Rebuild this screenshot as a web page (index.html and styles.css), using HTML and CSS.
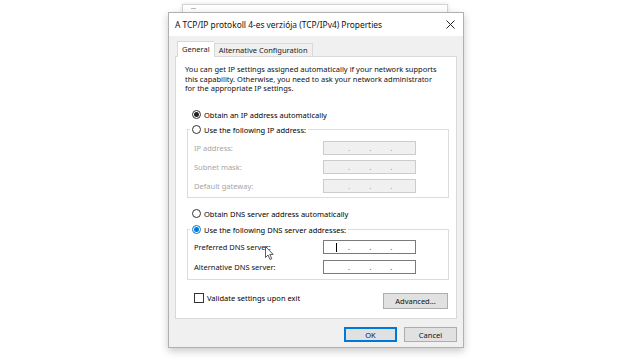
FILE: index.html
```html
<!DOCTYPE html>
<html lang="en">
<head>
  <meta charset="UTF-8">
  <title>TCP/IPv4 Properties</title>
  <link rel="stylesheet" href="styles.css">
</head>
<body>

  <div class="desktop">
    <div class="back-window"><span class="back-icon"></span></div>

    <div class="dialog">
      <div class="titlebar">
        <span class="title">A TCP/IP protokoll 4-es verziója (TCP/IPv4) Properties</span>
        <svg class="close" width="9" height="9" viewBox="0 0 9 9">
          <path d="M0.5 0.5 L8.5 8.5 M8.5 0.5 L0.5 8.5" stroke="#222" stroke-width="1" fill="none"/>
        </svg>
      </div>

      <div class="body">
        <div class="tabs">
          <div class="tab active">General</div>
          <div class="tab">Alternative Configuration</div>
        </div>

        <div class="panel">
          <p class="intro">You can get IP settings assigned automatically if your network supports<br>this capability. Otherwise, you need to ask your network administrator<br>for the appropriate IP settings.</p>

          <div class="radio-row first">
            <span class="radio checked"></span>
            <span>Obtain an IP address automatically</span>
          </div>

          <fieldset class="group ip-group">
            <legend>
              <span class="radio"></span>
              <span>Use the following IP address:</span>
            </legend>
            <div class="field-row disabled">
              <span class="field-label">IP address:</span>
              <div class="ip-box"><span>.</span><span>.</span><span>.</span></div>
            </div>
            <div class="field-row disabled">
              <span class="field-label">Subnet mask:</span>
              <div class="ip-box"><span>.</span><span>.</span><span>.</span></div>
            </div>
            <div class="field-row disabled">
              <span class="field-label">Default gateway:</span>
              <div class="ip-box"><span>.</span><span>.</span><span>.</span></div>
            </div>
          </fieldset>

          <div class="radio-row dns-auto">
            <span class="radio"></span>
            <span>Obtain DNS server address automatically</span>
          </div>

          <fieldset class="group dns-group">
            <legend>
              <span class="radio checked focus"></span>
              <span>Use the following DNS server addresses:</span>
            </legend>
            <div class="field-row">
              <span class="field-label">Preferred DNS server:</span>
              <div class="ip-box"><i class="caret"></i><span>.</span><span>.</span><span>.</span></div>
            </div>
            <div class="field-row">
              <span class="field-label">Alternative DNS server:</span>
              <div class="ip-box"><span>.</span><span>.</span><span>.</span></div>
            </div>
          </fieldset>

          <div class="bottom-row">
            <label class="check-row">
              <span class="checkbox"></span>
              <span>Validate settings upon exit</span>
            </label>
            <button class="btn advanced">Advanced...</button>
          </div>
        </div>

        <div class="actions">
          <button class="btn default">OK</button>
          <button class="btn">Cancel</button>
        </div>
      </div>
    </div>

    <svg class="pointer" width="10" height="15" viewBox="0 0 10 15">
      <path d="M0.5 0.5 L0.5 11.5 L3 9 L5 13.5 L6.8 12.7 L4.8 8.4 L8.2 8.4 Z" fill="#fff" stroke="#333" stroke-width="0.8" stroke-linejoin="round"/>
    </svg>
  </div>

</body>
</html>
```

FILE: styles.css
```css
body {
  margin: 0;
  background: #ffffff;
  font-family: "Noto Sans", "DejaVu Sans", sans-serif;
  color: #000;
}

.desktop {
  position: relative;
  width: 640px;
  height: 360px;
  overflow: hidden;
  padding: 12px 0 0 168px;
  box-sizing: border-box;
}

/* window behind the dialog */
.back-window {
  position: absolute;
  left: 182px;
  top: 4px;
  width: 264px;
  height: 40px;
  background: #fff;
  border: 1px solid #d4d4d4;
  box-shadow: 0 0 4px rgba(0, 0, 0, 0.12);
}

.back-icon {
  position: absolute;
  left: 8px;
  top: 3px;
  width: 5px;
  height: 3px;
  border-top: 1px solid #bbb;
}

.dialog {
  position: relative;
  width: 296px;
  height: 336px;
  box-sizing: border-box;
  border: 1px solid #b0b0b0;
  background: #f0f0f0;
  box-shadow: 0 3px 8px rgba(0, 0, 0, 0.22);
  display: flex;
  flex-direction: column;
}

.titlebar {
  height: 23px;
  background: #fff;
  display: flex;
  align-items: center;
  justify-content: space-between;
  padding: 0 8px 0 6px;
}

.title {
  font-size: 8.4px;
  color: #111;
}

.body {
  flex: 1;
  padding: 5px 6px 0 6px;
  display: flex;
  flex-direction: column;
}

.tabs {
  display: flex;
  align-items: flex-end;
  height: 15px;
  padding-left: 2px;
}

.tab {
  font-size: 7.5px;
  height: 13px;
  line-height: 13px;
  padding: 0 4px;
  border: 1px solid #d9d9d9;
  border-bottom: none;
  background: #f0f0f0;
  box-sizing: border-box;
  color: #222;
}

.tab.active {
  height: 16px;
  line-height: 14px;
  background: #fff;
  margin-bottom: -1px;
  position: relative;
  z-index: 1;
  border-right: none;
}

.panel {
  height: 263px;
  box-sizing: border-box;
  background: #fff;
  border: 1px solid #d9d9d9;
  padding: 8px 7px 0 9px;
  font-size: 7.5px;
}

.intro {
  margin: 0;
  line-height: 9.5px;
  color: #111;
  white-space: nowrap;
}

.radio-row {
  display: flex;
  align-items: center;
  height: 12px;
  margin-left: 7px;
  gap: 3px;
}

.radio-row.first {
  margin-top: 15px;
}

.radio-row.dns-auto {
  margin-top: 10px;
}

.radio {
  width: 9px;
  height: 9px;
  box-sizing: border-box;
  border: 1px solid #333;
  border-radius: 50%;
  background: #fff;
  display: inline-flex;
  align-items: center;
  justify-content: center;
  flex-shrink: 0;
}

.radio.checked::after {
  content: "";
  width: 5px;
  height: 5px;
  border-radius: 50%;
  background: #222;
}

.radio.focus {
  border-color: #0078d7;
}

.radio.focus::after {
  background: #0078d7;
}

.group {
  margin: 3px 0 0 2px;
  padding: 0 0 4px 6px;
  border: 1px solid #dcdcdc;
  min-width: 0;
}

.dns-group {
  margin-top: 4px;
  padding-bottom: 5px;
}

.group legend {
  display: flex;
  align-items: center;
  gap: 3px;
  height: 12px;
  padding: 0 2px;
  margin-left: -4px;
}

.field-row {
  display: flex;
  align-items: center;
  height: 14px;
  margin-top: 5px;
}

.ip-group .field-row:first-of-type {
  margin-top: 5px;
}

.dns-group .field-row:first-of-type {
  margin-top: 4px;
}

.dns-group .field-row + .field-row {
  margin-top: 6px;
}

.field-label {
  width: 129px;
  color: #111;
}

.field-row.disabled .field-label {
  color: #a6a6a6;
}

.ip-box {
  position: relative;
  width: 93px;
  height: 14px;
  box-sizing: border-box;
  border: 1px solid #7a7a7a;
  background: #fff;
  display: flex;
  align-items: center;
  padding-left: 24px;
  gap: 19px;
  font-size: 8px;
  color: #555;
}

.field-row.disabled .ip-box {
  border-color: #cccccc;
  background: #f0f0f0;
  color: #999;
}

.caret {
  position: absolute;
  left: 12px;
  top: 2px;
  width: 1px;
  height: 9px;
  background: #000;
}

.bottom-row {
  display: flex;
  align-items: flex-start;
  justify-content: space-between;
  margin-top: 13px;
  padding-left: 9px;
}

.check-row {
  display: flex;
  align-items: center;
  gap: 3px;
  height: 10px;
}

.checkbox {
  width: 10px;
  height: 10px;
  box-sizing: border-box;
  border: 1px solid #333;
  background: #fff;
}

.btn {
  font-family: inherit;
  font-size: 7.5px;
  height: 16px;
  width: 65px;
  padding: 0;
  background: #e1e1e1;
  border: 1px solid #adadad;
  color: #111;
}

.advanced {
  margin-right: 1px;
}

.actions {
  display: flex;
  justify-content: flex-end;
  gap: 7px;
  margin-top: 8px;
}

.actions .btn {
  width: 53px;
  height: 15px;
}

.btn.default {
  border: 1px solid #0078d7;
  box-shadow: inset 0 0 0 1px #0078d7;
}

.pointer {
  position: absolute;
  left: 265px;
  top: 246px;
}
```
